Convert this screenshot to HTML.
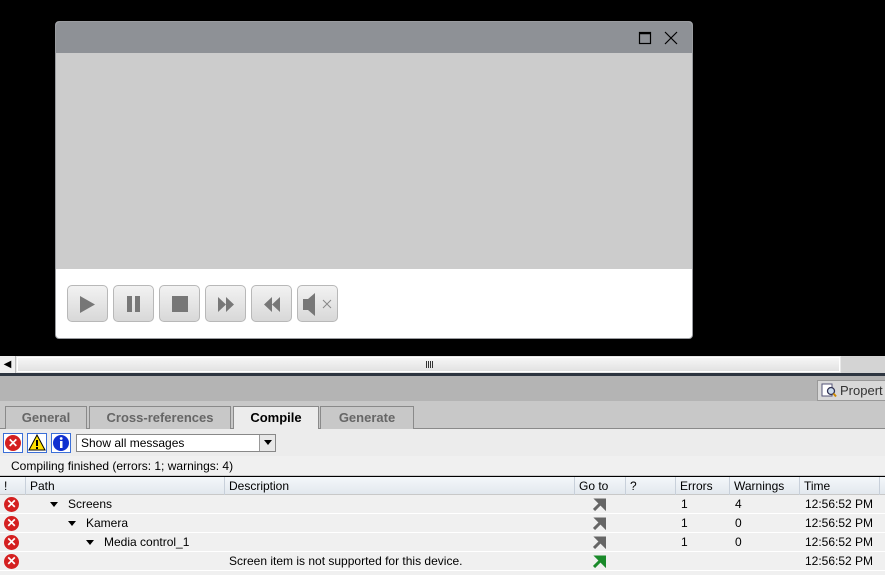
<!DOCTYPE html>
<html><head><style>
*{margin:0;padding:0;box-sizing:border-box}
body{width:885px;height:575px;overflow:hidden;background:#000;font-family:"Liberation Sans",sans-serif;font-size:12px;color:#000;position:relative}
.a{position:absolute}
.win{left:55px;top:21px;width:638px;height:318px;border:1px solid #9a9ca0;border-radius:4px;overflow:hidden;background:#fff}
.tb{left:0;top:0;width:100%;height:31px;background:#8e9196}
.vid{left:0;top:31px;width:100%;height:216px;background:#cccccc}
.btn{top:263px;width:41px;height:37px;border:1px solid #b8b8b8;border-radius:5px;background:linear-gradient(#f2f2f2,#d8d8d8)}
.btn svg{position:absolute;left:0;top:0}
.tab{top:406px;height:23px;border:1px solid #8a8a8a;border-bottom:none;background:#c8c8c8;color:#666;font-size:13px;font-weight:bold;text-align:center;line-height:21px}
.row{left:0;width:885px;height:19px;background:#f0f0f0;border-bottom:1px solid #fff}
.c{position:absolute;top:0;line-height:19px;font-size:12px;white-space:nowrap}
.err{position:absolute;left:4px;top:2px;width:15px;height:15px;border-radius:50%;background:#d42020;color:#fff;font-size:12px;font-weight:bold;text-align:center;line-height:15px}
.tri{position:absolute;top:7px;width:0;height:0;border-left:4px solid transparent;border-right:4px solid transparent;border-top:5px solid #000}
.hd{position:absolute;top:0;height:18px;line-height:18px;border-right:1px solid #c8d0da;padding-left:4px;font-size:12px}
</style></head><body>
<div class="a win">
 <div class="a tb"></div>
 <svg class="a" style="left:582px;top:9px" width="14" height="14"><rect x="1.5" y="1.5" width="11" height="11" fill="none" stroke="#000" stroke-width="1.2"/><line x1="1" y1="2.5" x2="13" y2="2.5" stroke="#000" stroke-width="1.5"/></svg>
 <svg class="a" style="left:608px;top:9px" width="14" height="14"><path d="M1 1L13 13M13 1L1 13" stroke="#000" stroke-width="1.2"/></svg>
 <div class="a vid"></div>
 <div class="a btn" style="left:11px"><svg width="41" height="37"><path d="M12 10L27 18.5L12 27Z" fill="#777"/></svg></div>
 <div class="a btn" style="left:57px"><svg width="41" height="37"><rect x="13" y="10" width="5" height="16" fill="#777"/><rect x="21" y="10" width="5" height="16" fill="#777"/></svg></div>
 <div class="a btn" style="left:103px"><svg width="41" height="37"><rect x="12" y="10" width="16" height="16" fill="#777"/></svg></div>
 <div class="a btn" style="left:149px"><svg width="41" height="37"><path d="M12 11L20 18.5L12 26ZM20 11L28 18.5L20 26Z" fill="#777"/></svg></div>
 <div class="a btn" style="left:195px"><svg width="41" height="37"><path d="M28 11L20 18.5L28 26ZM20 11L12 18.5L20 26Z" fill="#777"/></svg></div>
 <div class="a btn" style="left:241px"><svg width="41" height="37"><path d="M5 13h5l7-6v23l-7-6H5Z" fill="#777"/><path d="M25 14l8 8M33 14l-8 8" stroke="#888" stroke-width="1"/></svg></div>
</div>
<div class="a" style="left:0;top:356px;width:885px;height:17px;background:#e8e8e8"></div>
<div class="a" style="left:0;top:356px;width:16px;height:17px;background:#f0f0f0;border-right:1px solid #bbb;font-size:10px;line-height:17px;text-align:center">&#9664;</div>
<div class="a" style="left:17px;top:357px;width:823px;height:15px;border:1px solid #fff;background:linear-gradient(#f6f6f6,#e2e2e2)"></div>
<div class="a" style="left:426px;top:361px;width:7px;height:7px;background:repeating-linear-gradient(90deg,#333 0 1px,transparent 1px 2px)"></div>
<div class="a" style="left:841px;top:356px;width:44px;height:17px;background:#d4d4d4"></div>
<div class="a" style="left:0;top:373px;width:885px;height:3px;background:#2d3540"></div>
<div class="a" style="left:0;top:376px;width:885px;height:25px;background:#b4b4b4"></div>
<div class="a" style="left:817px;top:380px;width:68px;height:21px;border:1px solid #999;border-right:none;background:#d8d8d8;font-size:13px;line-height:19px;padding-left:22px;color:#333">Propert</div>
<svg class="a" style="left:821px;top:383px" width="16" height="15"><rect x="1" y="1" width="10" height="12" fill="#fff" stroke="#557"/><circle cx="10" cy="8" r="3.5" fill="#cde" stroke="#335" stroke-width="1.3"/><path d="M12.5 10.5L15 13.5" stroke="#c80" stroke-width="2"/></svg>
<div class="a" style="left:0;top:401px;width:885px;height:28px;background:#c8c8c8;border-bottom:1px solid #8a8a8a"></div>
<div class="a tab" style="left:5px;width:82px">General</div>
<div class="a tab" style="left:89px;width:142px">Cross-references</div>
<div class="a tab" style="left:233px;width:86px;height:24px;background:#ececec;color:#000">Compile</div>
<div class="a tab" style="left:320px;width:94px">Generate</div>
<div class="a" style="left:0;top:429px;width:885px;height:27px;background:#ececec"></div>
<div class="a" style="left:3px;top:433px;width:20px;height:20px;border:1px solid #3b6fd8;background:#fff"><div class="err" style="left:1px;top:1px;width:16px;height:16px;line-height:16px">✕</div></div>
<div class="a" style="left:27px;top:433px;width:20px;height:20px;border:1px solid #3b6fd8;background:#fff"><svg width="18" height="18"><path d="M9 1L17 16H1Z" fill="#ffe000" stroke="#000"/><rect x="8" y="6" width="2" height="6"/><rect x="8" y="13" width="2" height="2"/></svg></div>
<div class="a" style="left:51px;top:433px;width:20px;height:20px;border:1px solid #3b6fd8;background:#fff"><svg width="18" height="18"><circle cx="9" cy="9" r="8" fill="#1030d0"/><rect x="8" y="7" width="2.5" height="7" fill="#fff"/><circle cx="9.2" cy="4.5" r="1.4" fill="#fff"/></svg></div>
<div class="a" style="left:76px;top:434px;width:200px;height:18px;border:1px solid #888;background:#fff;font-size:12px;line-height:16px;padding-left:4px">Show all messages</div>
<div class="a" style="left:259px;top:435px;width:16px;height:16px;background:#e8e8e8;border-left:1px solid #999"><div class="tri" style="left:4px;top:5px"></div></div>
<div class="a" style="left:0;top:456px;width:885px;height:20px;background:#f0f0f0;border-bottom:1px solid #ccc;padding-left:11px;line-height:20px">Compiling finished (errors: 1; warnings: 4)</div>
<div class="a" style="left:0;top:477px;width:885px;height:18px;background:linear-gradient(#f4f7fa,#e2e8ee);border-bottom:1px solid #c8c8c8">
 <div class="hd" style="left:0;width:26px">!</div>
 <div class="hd" style="left:26px;width:199px">Path</div>
 <div class="hd" style="left:225px;width:350px">Description</div>
 <div class="hd" style="left:575px;width:51px">Go to</div>
 <div class="hd" style="left:626px;width:50px">?</div>
 <div class="hd" style="left:676px;width:54px">Errors</div>
 <div class="hd" style="left:730px;width:70px">Warnings</div>
 <div class="hd" style="left:800px;width:80px">Time</div>
</div>
<div class="a row" style="top:495px"><div class="err">✕</div><div class="tri" style="left:50px"></div><div class="c" style="left:68px">Screens</div><svg class="a" style="left:593px;top:3px" width="13" height="13"><path d="M1 12L9 4M4 2h8v8Z" stroke="#666" stroke-width="3" fill="#666"/></svg><div class="c" style="left:681px">1</div><div class="c" style="left:735px">4</div><div class="c" style="left:805px">12:56:52 PM</div></div>
<div class="a row" style="top:514px"><div class="err">✕</div><div class="tri" style="left:68px"></div><div class="c" style="left:86px">Kamera</div><svg class="a" style="left:593px;top:3px" width="13" height="13"><path d="M1 12L9 4M4 2h8v8Z" stroke="#666" stroke-width="3" fill="#666"/></svg><div class="c" style="left:681px">1</div><div class="c" style="left:735px">0</div><div class="c" style="left:805px">12:56:52 PM</div></div>
<div class="a row" style="top:533px"><div class="err">✕</div><div class="tri" style="left:86px"></div><div class="c" style="left:104px">Media control_1</div><svg class="a" style="left:593px;top:3px" width="13" height="13"><path d="M1 12L9 4M4 2h8v8Z" stroke="#666" stroke-width="3" fill="#666"/></svg><div class="c" style="left:681px">1</div><div class="c" style="left:735px">0</div><div class="c" style="left:805px">12:56:52 PM</div></div>
<div class="a row" style="top:552px"><div class="err">✕</div><div class="c" style="left:229px">Screen item is not supported for this device.</div><svg class="a" style="left:593px;top:3px" width="13" height="13"><path d="M1 12L9 4M4 2h8v8Z" stroke="#1a8a2a" stroke-width="3" fill="#1a8a2a"/></svg><div class="c" style="left:805px">12:56:52 PM</div></div>
<div class="a" style="left:0;top:571px;width:885px;height:4px;background:#f0f0f0"></div>
</body></html>
